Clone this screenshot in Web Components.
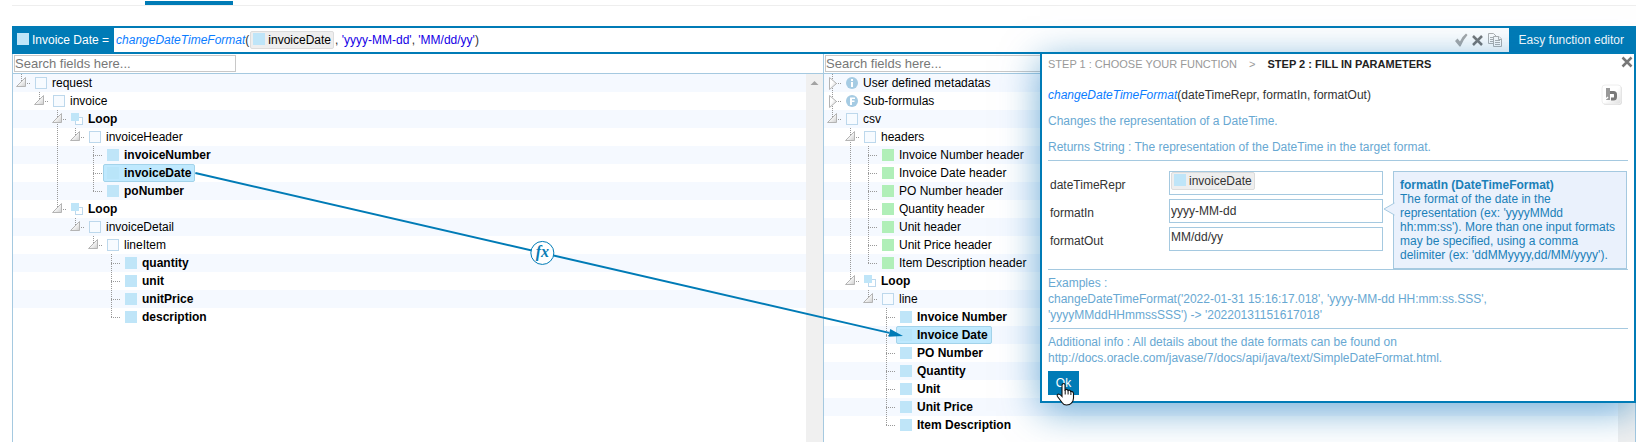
<!DOCTYPE html>
<html lang="en">
<head>
<meta charset="utf-8">
<title>Field mapping</title>
<style>
  html, body { margin: 0; height: 100%; }
  body {
    font: 12px/16px "Liberation Sans", Arial, sans-serif;
    color: #000; background: #fff; overflow: hidden;
    --brand: #007bb6; --rule: #a5c9e0; --leaf: #bfe5f8;
  }
</style>
</head>
<body>
<mapping-page></mapping-page>

<script>
const define = (name, html, setup) => {
  const template = document.createElement('template');
  template.innerHTML = html;
  customElements.define(name, class extends HTMLElement {
    constructor() {
      super();
      this.attachShadow({ mode: 'open' }).append(template.content.cloneNode(true));
    }
    connectedCallback() { if (setup) setup(this, this.shadowRoot); }
  });
};

/* Small square or round marker in front of a field name */
const glyphs = {
  leaf: '<rect width="12" height="12" fill="#bfe5f8"/>',
  picked: '<rect width="12" height="12" fill="#b9e5f9"/>',
  green: '<rect width="12" height="12" fill="#b0efb8"/>',
  group: '<rect x=".5" y=".5" width="11" height="11" fill="#f7fbff" stroke="#bdd8ec"/>',
  loop: '<rect x="4.5" y="4.5" width="7" height="7" fill="#fff" stroke="#bdd8ec"/><rect width="8" height="8" fill="#bfe5f8"/>',
  info: '<circle cx="6" cy="6" r="6" fill="#a5cbe3"/><path d="M5 2h2v2H5zM5 5h2v5H5z" fill="#fff"/>',
  formula: '<circle cx="6" cy="6" r="6" fill="#a5cbe3"/><path d="M4 2.500h5V4H6V5.500H8.500V7H6V10H4z" fill="#fff"/>'
};
define('field-icon', `<style>
  :host { display: block; flex: none; width: 12px; height: 12px; }
  svg { display: block; }
</style><svg width="12" height="12" aria-hidden="true"></svg>`, (host, root) => {
  root.querySelector('svg').innerHTML = glyphs[host.getAttribute('kind') || 'leaf'];
});

define('field-token', `<style>
  :host { display: inline-flex; align-items: center; gap: 3px; box-sizing: border-box; height: 18px;
    padding: 0 2px; border: 1px solid #dcdcdc; border-radius: 2px; background: #eee; }
  field-icon { margin-bottom: 2px; }
</style><field-icon></field-icon><span><slot></slot></span>`);

/* One tree entry; children go in its slot and draw one level deeper */
define('tree-node', `<style>
  :host { display: block;
    background: repeating-linear-gradient(#999 0 1px, transparent 1px 2px) 8px 0 / 1px 100% no-repeat; }
  :host(:last-child) { background-size: 1px 9px; }
  .row { display: flex; height: 18px; white-space: nowrap; }
  .twig { flex: none; width: 18px; height: 18px;
    background: repeating-linear-gradient(90deg, #999 0 1px, transparent 1px 2px) 8px 9px / 9px 1px no-repeat; }
  .twig svg { display: none; }
  :host([state]) .twig svg { display: block; }
  .chip { display: flex; align-items: center; gap: 5px; box-sizing: border-box; height: 18px;
    padding: 0 3px; border: 1px solid transparent; border-radius: 2px; line-height: 16px; }
  :host([bold]) .chip { font-weight: bold; }
  :host([picked]) .chip { background: #bfe9fe; border-color: #a3d3ea; }
  .kids { padding-left: 18px; }
</style>
<div class="row" role="treeitem">
  <span class="twig"><svg width="18" height="18" aria-hidden="true">
    <defs><linearGradient id="g" x2="1" y2="1"><stop offset=".4" stop-color="#fff"/><stop offset="1" stop-color="#ccc"/></linearGradient></defs>
    <path fill="url(#g)" stroke="#b4b4b4"/></svg></span>
  <span class="chip"><field-icon></field-icon><span class="name"></span></span>
</div>
<div class="kids" role="group"><slot></slot></div>`, (host, root) => {
  root.querySelector('.name').textContent = host.getAttribute('name');
  const icon = document.createElement('field-icon');
  icon.setAttribute('kind', host.hasAttribute('picked') ? 'picked' : host.getAttribute('kind') || 'leaf');
  root.querySelector('field-icon').replaceWith(icon);
  root.querySelector('path').setAttribute('d',
    host.getAttribute('state') === 'closed' ? 'M5.500 3.500L12.500 9.500L5.500 15.500Z' : 'M3.500 12.500L12.500 3.500V12.500Z');
});

define('tab-strip', `<style>
  :host { display: flex; height: 5px; margin-left: 12px; border-bottom: 1px solid #eee; }
  .active { width: 88px; height: 4px; margin: 1px 0 0 133px; background: var(--brand); }
</style><div class="active"></div>`);

define('formula-bar', `<style>
  :host { display: flex; align-items: stretch; box-sizing: border-box; height: 28px;
    border: solid var(--brand); border-width: 2px 0; background: #fff; }
  .target { display: flex; align-items: center; gap: 3px; padding: 0 5px; background: var(--brand); color: #fff; }
  .target field-icon { margin-bottom: 2px; }
  .formula { flex: 1; display: flex; align-items: center; padding-left: 2px; white-space: pre; color: #333; }
  .formula field-token { margin: 0 1px; color: #000; }
  i { color: #0a7cff; }
  b { font-weight: normal; color: #1400e6; }
  .tools { display: flex; align-items: center; gap: 4px; padding-right: 6px; }
  button { font: inherit; border: 0; padding: 0; background: none; }
  .tools button { display: block; height: 16px; }
  svg { display: block; }
  .easy { padding: 0 12px 0 10px; background: var(--brand); color: #fff; }
</style>
<div class="target"><field-icon></field-icon><span>Invoice Date =</span></div>
<div class="formula"><i>changeDateTimeFormat</i>(<field-token>invoiceDate</field-token>, <b>'yyyy-MM-dd'</b>, <b>'MM/dd/yy'</b>)</div>
<div class="tools">
  <button aria-label="Validate"><svg width="14" height="16"><path d="M1 9L3.500 6.500L6 9.500Q8 4.500 12 1.500L13.500 3Q9 8 6.500 14.500H5.500Z" fill="#a8a8a8"/></svg></button>
  <button aria-label="Cancel"><svg width="11" height="16"><path d="M1 4L10 13M10 4L1 13" stroke="#777" stroke-width="2.500"/></svg></button>
  <button aria-label="Copy"><svg width="16" height="16" fill="#fff" stroke="#b0b0b0"><path d="M1.500 1.500H6.500L9.500 4.500V11.500H1.500Z"/><path d="M3 5.500H6M3 7.500H6M3 9.500H6"/><path d="M6.500 4.500H12L14.500 7V14.500H6.500Z"/><path d="M8 8.500H13M8 10.500H13M8 12.500H13M11.500 4.500V7.500H14.500"/></svg></button>
</div>
<button class="easy">Easy function editor</button>`);

define('field-pane', `<style>
  :host { display: flex; flex-direction: column; box-sizing: border-box; border-left: 1px solid var(--rule); min-width: 0; }
  .search { padding: 1px; height: 17px; border-bottom: 1px solid var(--rule); }
  input { display: block; box-sizing: border-box; width: 222px; height: 17px; margin: 0; padding: 0;
    border: 1px solid #c8c8c8; border-radius: 0; background: #fff; font: 13px/15px "Liberation Sans", Arial, sans-serif; outline: 0; }
  input::placeholder { color: #777; opacity: 1; }
  .body { flex: 1; display: flex; }
  .tree { flex: 1; }
  .rows { background: repeating-linear-gradient(#f5f9ff 0 18px, #fff 18px 36px); }
  .scroll { width: 17px; background: #f0f0f0; }
  .scroll svg { display: block; }
</style>
<div class="search"><input type="text" placeholder="Search fields here..." aria-label="Search fields"></div>
<div class="body">
  <div class="tree"><div class="rows" role="tree"><slot></slot></div></div>
  <div class="scroll"><svg width="17" height="17" aria-hidden="true"><path d="M4.500 11L8.500 7L12.500 11Z" fill="#a3a3a3"/></svg></div>
</div>`);

/* Arrow from the picked source chip to the picked target chip */
define('mapping-link', `<style>
  :host { position: absolute; inset: 0; pointer-events: none; }
  svg { display: block; width: 100%; height: 100%; }
  text { font: italic bold 16px "Liberation Serif", serif; fill: #0a7db5; }
</style>
<svg aria-label="Mapping">
  <line stroke="#007bb6" stroke-width="2"/>
  <path d="M0 0L-14 -4V4Z" fill="#007bb6"/>
  <g><circle r="11.500" fill="#fff" stroke="#007bb6"/><text text-anchor="middle" y="4">fx</text></g>
</svg>`);

define('param-form', `<style>
  :host { display: grid; grid-template-columns: 121px 1fr 245px; padding-top: 10px; }
  .labels, .inputs { display: grid; grid-auto-rows: 24px; gap: 4px; }
  label { padding: 6px 0 0 2px; line-height: 16px; }
  .box { box-sizing: border-box; display: block; width: 100%; height: 24px; margin: 0; padding: 0 1px;
    border: 1px solid var(--rule); border-radius: 0; background: #fff; color: #333; resize: none; outline: 0;
    font: 12px/16px "Liberation Sans", Arial, sans-serif; }
  textarea.box { padding: 1px; overflow: hidden; }
  .tip { position: relative; margin: 0 1px 0 10px; padding: 6px; border: 1px solid var(--rule);
    background: #eaf1fc; color: #1b80b8; line-height: 14px; }
  .tip svg { position: absolute; left: -11px; top: 30px; }
</style>
<div class="labels">
  <label>dateTimeRepr</label><label>formatIn</label><label>formatOut</label>
</div>
<div class="inputs">
  <div class="box" role="textbox" aria-label="dateTimeRepr"><field-token>invoiceDate</field-token></div>
  <input class="box" aria-label="formatIn" value="yyyy-MM-dd">
  <textarea class="box" aria-label="formatOut" rows="1">MM/dd/yy</textarea>
</div>
<div class="tip"><svg width="12" height="14" aria-hidden="true"><path d="M11.500 1L1 7L11.500 13" fill="#eaf1fc" stroke="#a5c9e0"/></svg>
<b>formatIn (DateTimeFormat)</b><br>The format of the date in the representation (ex: 'yyyyMMdd hh:mm:ss'). More than one input formats may be specified, using a comma delimiter (ex: 'ddMMyyyy,dd/MM/yyyy').</div>`, (host, root) => {
  /* Clicking a label moves focus to its field */
  const fields = root.querySelectorAll('.box');
  root.querySelectorAll('label').forEach((label, i) => {
    fields[i].id = 'param-' + i;
    label.htmlFor = fields[i].id;
  });
});

define('function-dialog', `<style>
  :host { position: absolute; right: 0; top: 26px; width: 580px; padding: 0 6px 6px;
    border: 2px solid var(--brand); background: #fff; color: #333;
    box-shadow: 0 8px 36px rgba(0, 110, 180, .55); }
  header { display: flex; align-items: center; gap: 12px; height: 20px; font-size: 11px; color: #999; }
  header b { color: #222; }
  button { font: inherit; border: 0; padding: 0; background: none; }
  svg { display: block; }
  .close { margin: 0 -5px 4px auto; }
  .sig { display: flex; justify-content: space-between; align-items: center; height: 16px; margin: 13px 5px 10px 0; }
  i { color: #0a7cff; }
  p { margin: 0; color: #68a8d2; }
  .note { margin-bottom: 10px; }
  .ruled { padding-bottom: 5px; border-bottom: 1px solid var(--rule); }
  param-form { border-bottom: 1px solid var(--rule); }
  .para { padding-top: 5px; }
  .ok { display: block; width: 31px; height: 24px; margin-top: 5px; background: var(--brand); color: #fff; }
  .hand { position: absolute; left: 14px; bottom: -5px; }
</style>
<header><span>STEP 1 : CHOOSE YOUR FUNCTION</span><span>&gt;</span><b>STEP 2 : FILL IN PARAMETERS</b>
  <button class="close" aria-label="Close"><svg width="12" height="12"><path d="M1.500 1.500L10.500 10.500M10.500 1.500L1.500 10.500" stroke="#777" stroke-width="2.500"/></svg></button></header>
<div class="sig"><span><i>changeDateTimeFormat</i>(dateTimeRepr, formatIn, formatOut)</span>
  <button aria-label="Documentation"><svg width="22" height="22">
    <defs><linearGradient id="s" x2="1" y2="1"><stop offset=".5" stop-color="#fff"/><stop offset="1" stop-color="#ddd"/></linearGradient></defs>
    <rect x="2" y="2" width="19" height="19" rx="3" fill="#ddd"/><rect x="1" y="1" width="19" height="19" rx="3" fill="url(#s)" stroke="#eee"/>
    <path d="M5 4H9V16H5Z" fill="#999"/><path d="M9 8.500H12.500Q14.500 8.500 14.500 10.500V13Q14.500 15 12.500 15H10" fill="none" stroke="#777" stroke-width="3"/><path d="M5 15L7 13" stroke="#fff" stroke-width="1.500"/></svg></button></div>
<p class="note">Changes the representation of a DateTime.</p>
<p class="ruled">Returns String : The representation of the DateTime in the target format.</p>
<param-form></param-form>
<p class="para ruled">Examples :<br>changeDateTimeFormat('2022-01-31 15:16:17.018', 'yyyy-MM-dd HH:mm:ss.SSS',<br>'yyyyMMddHHmmssSSS') -&gt; '20220131151617018'</p>
<p class="para">Additional info : All details about the date formats can be found on http://docs.oracle.com/javase/7/docs/api/java/text/SimpleDateFormat.html.</p>
<button class="ok">Ok</button>
<svg class="hand" width="20" height="24" aria-hidden="true"><path d="M6.500 2Q8.500 .500 9 3V8Q11 6.500 12 8.500Q14 7.500 14.700 9.500Q17 9 17.500 11.500V16Q17.500 19 15.500 21Q14 23 10.500 23Q7.500 23 6 20.500L1.500 14.500Q.500 12.500 2.500 12Q4 12 6 14.500V3Z" fill="#fff" stroke="#111" stroke-width="1.100"/><path d="M9.200 8V12.500M12.100 8.500V12.500M14.900 9.500V13" stroke="#111"/></svg>`);

define('mapping-page', `<style>
  :host { display: flex; flex-direction: column; height: 100vh; }
  .editor { flex: 1; display: flex; flex-direction: column; position: relative; margin: 20px 0 0 12px; }
  .panes { flex: 1; display: grid; grid-template-columns: 1fr 1fr; }
  field-pane:first-child { margin-right: 1px; }
  field-pane + field-pane { margin-left: -1px; border-right: 1px solid var(--rule); }
</style>
<tab-strip></tab-strip>
<div class="editor">
  <formula-bar></formula-bar>
  <div class="panes">
    <field-pane>
      <tree-node name="request" kind="group" state="open">
        <tree-node name="invoice" kind="group" state="open">
          <tree-node name="Loop" kind="loop" state="open" bold>
            <tree-node name="invoiceHeader" kind="group" state="open">
              <tree-node name="invoiceNumber" bold></tree-node>
              <tree-node name="invoiceDate" bold picked class="from"></tree-node>
              <tree-node name="poNumber" bold></tree-node>
            </tree-node>
          </tree-node>
          <tree-node name="Loop" kind="loop" state="open" bold>
            <tree-node name="invoiceDetail" kind="group" state="open">
              <tree-node name="lineItem" kind="group" state="open">
                <tree-node name="quantity" bold></tree-node>
                <tree-node name="unit" bold></tree-node>
                <tree-node name="unitPrice" bold></tree-node>
                <tree-node name="description" bold></tree-node>
              </tree-node>
            </tree-node>
          </tree-node>
        </tree-node>
      </tree-node>
    </field-pane>
    <field-pane>
      <tree-node name="User defined metadatas" kind="info" state="closed"></tree-node>
      <tree-node name="Sub-formulas" kind="formula" state="closed"></tree-node>
      <tree-node name="csv" kind="group" state="open">
        <tree-node name="headers" kind="group" state="open">
          <tree-node name="Invoice Number header" kind="green"></tree-node>
          <tree-node name="Invoice Date header" kind="green"></tree-node>
          <tree-node name="PO Number header" kind="green"></tree-node>
          <tree-node name="Quantity header" kind="green"></tree-node>
          <tree-node name="Unit header" kind="green"></tree-node>
          <tree-node name="Unit Price header" kind="green"></tree-node>
          <tree-node name="Item Description header" kind="green"></tree-node>
        </tree-node>
        <tree-node name="Loop" kind="loop" state="open" bold>
          <tree-node name="line" kind="group" state="open">
            <tree-node name="Invoice Number" bold></tree-node>
            <tree-node name="Invoice Date" bold picked class="to"></tree-node>
            <tree-node name="PO Number" bold></tree-node>
            <tree-node name="Quantity" bold></tree-node>
            <tree-node name="Unit" bold></tree-node>
            <tree-node name="Unit Price" bold></tree-node>
            <tree-node name="Item Description" bold></tree-node>
          </tree-node>
        </tree-node>
      </tree-node>
    </field-pane>
  </div>
  <mapping-link></mapping-link>
  <function-dialog></function-dialog>
</div>`, (host, root) => {
  const link = root.querySelector('mapping-link');
  const chip = name => root.querySelector(name).shadowRoot.querySelector('.chip').getBoundingClientRect();
  const draw = () => {
    const base = link.getBoundingClientRect(), from = chip('.from'), to = chip('.to');
    const x1 = from.right - base.left, y1 = from.top + 9 - base.top;
    const x2 = to.left + 7 - base.left, y2 = to.top + 10 - base.top;
    const angle = Math.atan2(y2 - y1, x2 - x1);
    const ex = x2 - 14 * Math.cos(angle), ey = y2 - 14 * Math.sin(angle);
    const svg = link.shadowRoot;
    Object.entries({ x1, y1, x2: ex, y2: ey }).forEach(([k, v]) => svg.querySelector('line').setAttribute(k, v));
    svg.querySelector('path').setAttribute('transform', `translate(${x2} ${y2}) rotate(${angle * 180 / Math.PI})`);
    svg.querySelector('g').setAttribute('transform', `translate(${(x1 + ex) / 2} ${(y1 + ey) / 2})`);
  };
  draw();
  new ResizeObserver(draw).observe(host);
});
</script>
</body>
</html>
